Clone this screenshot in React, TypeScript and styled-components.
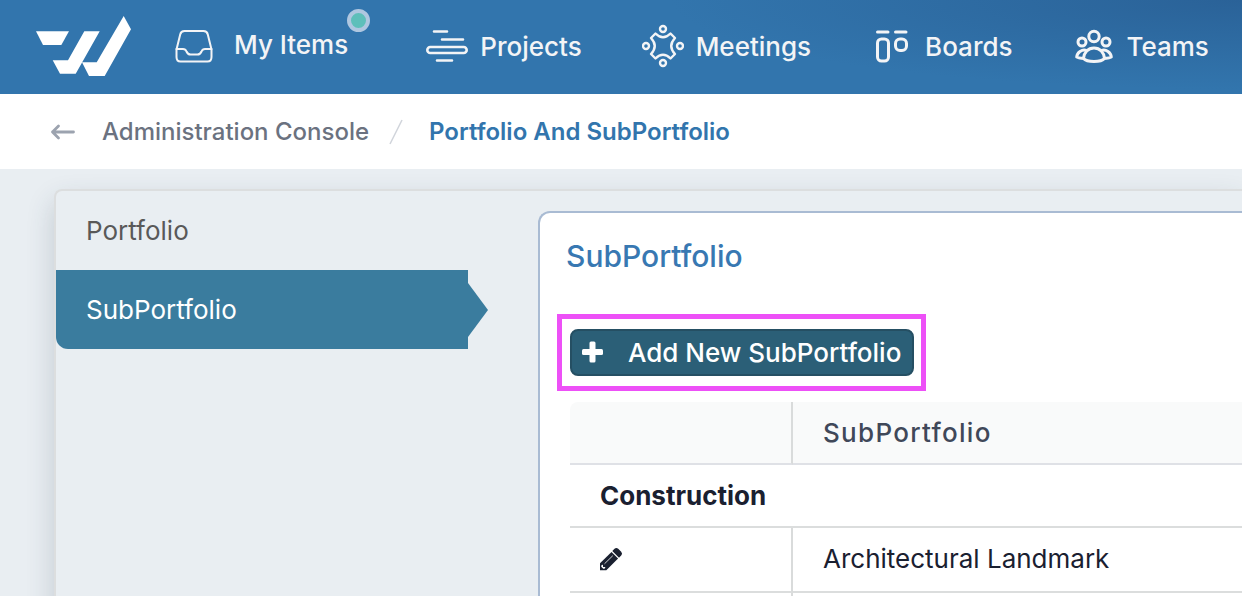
import React from "react";
import styled, { createGlobalStyle } from "styled-components";

const GlobalStyle = createGlobalStyle`
  *, *::before, *::after { box-sizing: border-box; }
  body {
    margin: 0;
    background: #e9eef2;
    color: #1a2030;
    font-family: Inter, "Liberation Sans", sans-serif;
    font-size: 26px;
    line-height: 32px;
    overflow-x: hidden;
  }
  ul { list-style: none; margin: 0; padding: 0; }
  a { color: inherit; text-decoration: none; }
  svg { display: block; flex: none; }
`;

const Page = styled.div`
  display: flex;
  flex-direction: column;
  height: 100vh;
  overflow: hidden;
`;

const TopBar = styled.header`
  display: flex;
  flex: none;
  align-items: center;
  height: 94px;
  padding-left: 36px;
  background: radial-gradient(ellipse 46% 95% at 100% 0, #2a6298 0%, #3275ad 100%) #3275ad;

  svg { margin-bottom: 2px; }
`;

const NavList = styled.ul`
  display: flex;
  align-items: center;
  gap: 60px;
  margin-left: 42px;
`;

const NavLink = styled.a<{ $wide?: boolean }>`
  position: relative;
  display: flex;
  align-items: center;
  gap: ${(p) => (p.$wide ? 19 : 12)}px;
  padding-right: ${(p) => (p.$wide ? 18 : 0)}px;
  color: #f3f4f6;
  font-weight: 500;
  white-space: nowrap;
`;

const NavLabel = styled.span<{ $raised?: boolean }>`
  padding-bottom: ${(p) => (p.$raised ? 4 : 0)}px;
`;

const StatusDot = styled.span`
  position: absolute;
  top: -15px;
  right: -4px;
  width: 23px;
  height: 23px;
  border: 4px solid #afc7e0;
  border-radius: 50%;
  background: #5ebfba;
`;

const Crumbs = styled.nav`
  display: flex;
  flex: none;
  align-items: center;
  height: 75px;
  padding-left: 50px;
  background: #fff;
  font-size: 24px;
  white-space: nowrap;
`;

const CrumbLink = styled.a<{ $current?: boolean }>`
  margin-left: 26px;
  color: ${(p) => (p.$current ? "#3275ad" : "#6b7280")};
  font-weight: ${(p) => (p.$current ? 600 : 500)};
`;

const Slash = styled.svg`
  margin-left: 20px;
`;

const Workspace = styled.main`
  display: flex;
  flex: 1;
  margin: 20px 0 0 54px;
  border: 2px solid #dcdedf;
  border-width: 2px 0 0 2px;
  border-radius: 8px 0 0 0;
  background: #e9eef2;
  box-shadow: 0 12px 28px rgba(40, 60, 80, 0.2);
`;

const SideMenu = styled.ul`
  flex: none;
  width: 412px;
`;

const SideLink = styled.a<{ $active?: boolean }>`
  position: relative;
  display: flex;
  align-items: center;
  height: 79px;
  padding-left: 30px;
  color: ${(p) => (p.$active ? "#fff" : "#595959")};
  background: ${(p) => (p.$active ? "#3a7c9e" : "transparent")};
  border-bottom-left-radius: ${(p) => (p.$active ? 12 : 0)}px;

  &::after {
    content: ${(p) => (p.$active ? '""' : "none")};
    position: absolute;
    left: 100%;
    top: 13px;
    border: solid transparent;
    border-width: 27px 0 27px 20px;
    border-left-color: #3a7c9e;
  }
`;

const Card = styled.section`
  flex: 1;
  min-width: 0;
  margin: 20px 0 0 70px;
  padding: 23px 0 0 17px;
  border: 2px solid #a9bbd3;
  border-width: 2px 0 0 2px;
  border-radius: 12px 0 0 0;
  background: #fff;
`;

const CardTitle = styled.h1`
  margin: 0 0 38px 9px;
  color: #3878b2;
  font-size: 30px;
  font-weight: 500;
  line-height: 40px;
`;

const Highlight = styled.div`
  width: fit-content;
  padding: 10px 7px 10px 8px;
  border: 5px solid #ed50f7;
`;

const AddButton = styled.button`
  display: flex;
  align-items: center;
  gap: 24px;
  height: 47px;
  padding: 0 11px 0 10px;
  border: 2px solid #254f63;
  border-radius: 8px;
  background: #2b5f77;
  color: #fff;
  font: 500 26px/32px Inter, "Liberation Sans", sans-serif;
  white-space: nowrap;
`;

const Grid = styled.table`
  width: calc(100% - 13px);
  margin: 11px 0 0 13px;
  border-collapse: separate;
  border-spacing: 0;
  table-layout: fixed;
`;

const ActionCol = styled.col`
  width: 223px;
`;

const HeadCell = styled.th<{ $first?: boolean }>`
  height: 63px;
  padding: 0 30px;
  border-bottom: 2px solid #dfe1e6;
  border-right: ${(p) => (p.$first ? "2px solid #d9dbdb" : "0")};
  border-top-left-radius: ${(p) => (p.$first ? 8 : 0)}px;
  background: #f9fafa;
  color: #404859;
  font-weight: 500;
  letter-spacing: 0.05em;
  text-align: left;
`;

const GroupCell = styled.th`
  height: 63px;
  padding: 0 30px;
  border-bottom: 2px solid #dbdddd;
  font-weight: 700;
  text-align: left;
`;

const Cell = styled.td<{ $first?: boolean }>`
  height: 65px;
  padding: 0 30px 2px;
  border-bottom: 2px solid #dbdddd;
  border-right: ${(p) => (p.$first ? "2px solid #d9dbdb" : "0")};
  white-space: nowrap;
`;

const EditButton = styled.button`
  display: block;
  margin: 0;
  padding: 0;
  border: 0;
  background: none;
  color: #1a2030;
`;

const stroke = {
  fill: "none",
  stroke: "currentColor",
  strokeWidth: 2,
  strokeLinecap: "round" as const,
  strokeLinejoin: "round" as const,
};

const Logo = () => (
  <svg width="95" height="60" viewBox="36 16 95 60" fill="#fff" role="img" aria-label="Home">
    <path d="M36 31.3H69L61.3 45H43Z" />
    <path d="M52.7 60.3H68L84.3 31.3H99.7L75.7 73.7H60Z" />
    <path d="M82 62.3H96.7L123.7 16L131 29.3L104.7 76H89Z" />
  </svg>
);

const InboxIcon = () => (
  <svg width="42" height="44" viewBox="0 0 42 44" {...stroke}>
    <path d="M11.5 7H30.5Q34 7 34.8 10.4L38.5 25.5V33Q38.5 37.5 34.5 37.5H7.5Q3.5 37.5 3.5 33V25.5L7.2 10.4Q8 7 11.5 7Z" />
    <path d="M3.5 25H10Q12.5 25 13.5 27.5Q14.8 30.5 17.5 30.5H24.5Q27.2 30.5 28.5 27.5Q29.5 25 32 25H38.5" />
  </svg>
);

const ProjectsIcon = () => (
  <svg width="42" height="44" viewBox="0 0 42 44" {...stroke} strokeWidth={2.6}>
    <path d="M8 7.5H21M16 15.5H37M11 36.5H26" />
    <rect x="1.3" y="23" width="39.4" height="6" rx="3" />
  </svg>
);

const MeetingsIcon = () => (
  <svg width="42" height="44" viewBox="0 0 42 44" {...stroke} strokeWidth={2.4}>
    <circle cx="21" cy="5" r="3" />
    <circle cx="21" cy="39" r="3" />
    <circle cx="4" cy="22" r="3" />
    <circle cx="38" cy="22" r="3" />
    <path d="M13.5 9.5Q21 17 28.5 9.5L33 14Q25.5 22 33 30L28.5 34.5Q21 27 13.5 34.5L9 30Q16.5 22 9 14Z" />
  </svg>
);

const BoardsIcon = () => (
  <svg width="42" height="44" viewBox="0 0 42 44" {...stroke} strokeWidth={3}>
    <path d="M6.5 8H17M24.5 8H35" />
    <rect x="6.5" y="15" width="11" height="22" rx="4" />
    <rect x="24.5" y="15" width="11" height="11.5" rx="4.5" />
  </svg>
);

const TeamsIcon = () => (
  <svg width="42" height="44" viewBox="0 0 42 44" {...stroke} strokeWidth={3}>
    <circle cx="21" cy="12.5" r="5.2" />
    <circle cx="9" cy="18" r="4" />
    <circle cx="33" cy="18" r="4" />
    <path d="M10.5 34.5C11 28.5 15 24 21 24S31 28.5 31.5 34.5C28 38.5 14 38.5 10.5 34.5Z" />
    <path d="M13.5 26.5C9 25 4 28.5 3.7 33Q7 34.8 10.5 34M28.5 26.5C33 25 38 28.5 38.3 33Q35 34.8 31.5 34" />
  </svg>
);

const ArrowIcon = () => (
  <svg width="26" height="18" viewBox="0 0 26 18" {...stroke} stroke="#9ca3af" strokeWidth={2.8}>
    <path d="M23.5 9H2.5M8.5 3L2.5 9L8.5 15" />
  </svg>
);

const PlusIcon = () => (
  <svg width="22" height="24" viewBox="0 0 22 24" fill="currentColor">
    <rect x="0" y="8" width="21" height="6" rx="1.5" />
    <rect x="7.5" y="0.5" width="6" height="21" rx="1.5" />
  </svg>
);

const PencilIcon = () => (
  <svg width="24" height="24" viewBox="1 0 24 24" fill="currentColor">
    <path d="M15.5 1.8Q17.3 0 19.2 1.8L22.2 4.8Q24 6.7 22.2 8.5L20 10.7L13.3 4Z" />
    <path d="M12.5 4.9L19.1 11.5L7.3 23.2H0.5V16.7Z" />
    <path d="M5.5 16.8L13.8 8.7" stroke="#fff" strokeWidth="0.8" fill="none" />
    <path d="M2.6 18L4 17.7V20H6.3L6 21.4L4.3 21.8L2.2 19.7Z" fill="#fff" />
  </svg>
);

const navItems = [
  { label: "My Items", Icon: InboxIcon, alert: true },
  { label: "Projects", Icon: ProjectsIcon },
  { label: "Meetings", Icon: MeetingsIcon },
  { label: "Boards", Icon: BoardsIcon },
  { label: "Teams", Icon: TeamsIcon },
];

export default function App() {
  return (
    <Page>
      <GlobalStyle />
      <TopBar>
        <Logo />
        <nav>
          <NavList>
            {navItems.map(({ label, Icon, alert }) => (
              <li key={label}>
                <NavLink href="#" $wide={alert}>
                  <Icon />
                  <NavLabel $raised={alert}>{label}</NavLabel>
                  {alert && <StatusDot />}
                </NavLink>
              </li>
            ))}
          </NavList>
        </nav>
      </TopBar>

      <Crumbs aria-label="Breadcrumb">
        <a href="#" aria-label="Back">
          <ArrowIcon />
        </a>
        <CrumbLink href="#">Administration Console</CrumbLink>
        <Slash width="14" height="26" viewBox="0 0 14 26" stroke="#d1d5db" strokeWidth="1.5">
          <path d="M1 25L13 1" />
        </Slash>
        <CrumbLink href="#" $current aria-current="page">
          Portfolio And SubPortfolio
        </CrumbLink>
      </Crumbs>

      <Workspace>
        <SideMenu>
          <li>
            <SideLink href="#">Portfolio</SideLink>
          </li>
          <li>
            <SideLink href="#" $active>
              SubPortfolio
            </SideLink>
          </li>
        </SideMenu>

        <Card>
          <CardTitle>SubPortfolio</CardTitle>
          <Highlight>
            <AddButton type="button">
              <PlusIcon />
              Add New SubPortfolio
            </AddButton>
          </Highlight>
          <Grid>
            <colgroup>
              <ActionCol />
              <col />
            </colgroup>
            <thead>
              <tr>
                <HeadCell $first />
                <HeadCell scope="col">SubPortfolio</HeadCell>
              </tr>
            </thead>
            <tbody>
              <tr>
                <GroupCell colSpan={2} scope="rowgroup">
                  Construction
                </GroupCell>
              </tr>
              <tr>
                <Cell $first>
                  <EditButton type="button" aria-label="Edit Architectural Landmark">
                    <PencilIcon />
                  </EditButton>
                </Cell>
                <Cell>Architectural Landmark</Cell>
              </tr>
              <tr>
                <Cell $first />
                <Cell />
              </tr>
            </tbody>
          </Grid>
        </Card>
      </Workspace>
    </Page>
  );
}
